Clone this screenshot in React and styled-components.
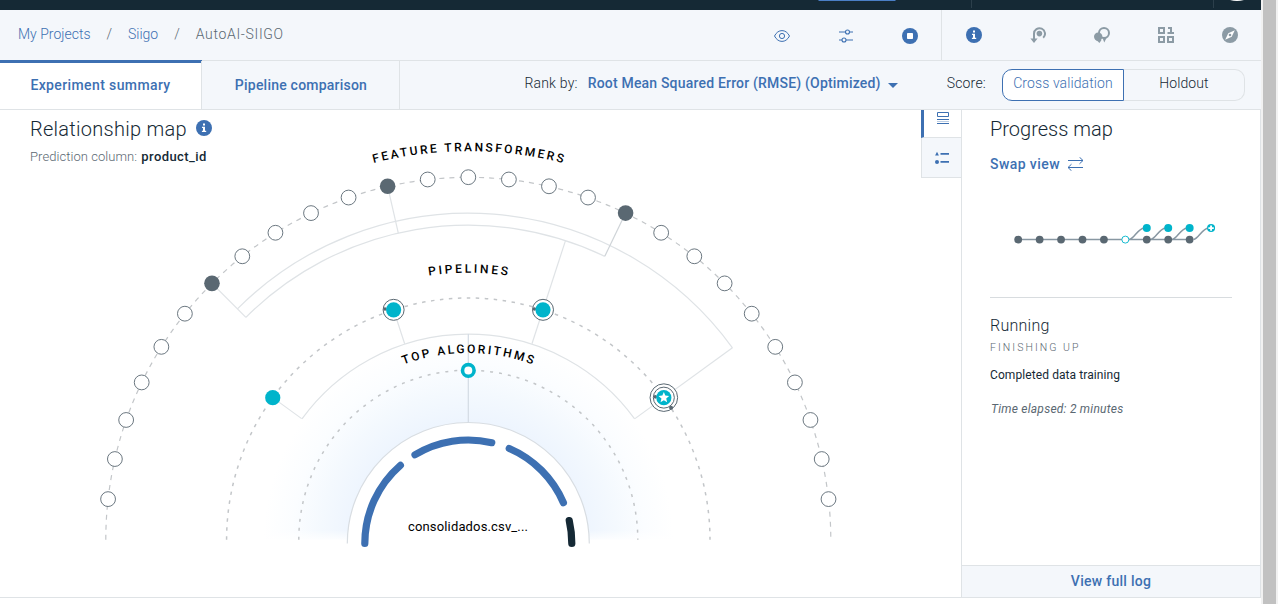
import React from "react";
import styled, { createGlobalStyle } from "styled-components";

const blue = "#3d70b2";
const ink = "#152935";
const slate = "#5a6872";
const line = "#dfe3e6";
const panel = "#f4f7fb";
const teal = "#00b4cb";
const iconGrey = "#8c9ba5";

const GlobalStyle = createGlobalStyle`
  *, *::before, *::after { box-sizing: border-box; }
  html, body { margin: 0; padding: 0; overflow: hidden; background: #fff; }
  body { font-family: Roboto, "Liberation Sans", sans-serif; font-size: 14px; font-weight: 300; color: ${ink}; }
  button { font: inherit; color: inherit; border: 0; background: none; padding: 0; margin: 0; }
  svg { display: block; flex: none; }
`;

/* ---------- page frame ---------- */
const Window = styled.div`
  display: flex;
  width: 1278px;
  height: 604px;
`;
const Page = styled.div`
  display: flex;
  flex-direction: column;
  width: 1261px;
`;
const ScrollTrack = styled.div`
  width: 17px;
  padding: 0 2px;
  background: #f1f1f1;
`;
const ScrollThumb = styled.div`
  height: 100%;
  background: #c1c1c1;
`;
const TopBar = styled.header`
  height: 10px;
  flex: none;
  background: ${ink};
`;

/* ---------- breadcrumb bar ---------- */
const NavBar = styled.nav`
  display: flex;
  align-items: stretch;
  height: 51px;
  flex: none;
  background: ${panel};
  border-bottom: 1px solid ${line};
`;
const Crumbs = styled.div`
  display: flex;
  align-items: center;
  flex: 1;
  padding-left: 18px;
  padding-bottom: 2px;
`;
const Crumb = styled.span`
  color: ${(p) => (p.$current ? slate : blue)};
  letter-spacing: ${(p) => p.$track || 0}px;
`;
const Slash = styled.span`
  width: 37.5px;
  text-align: center;
  color: ${slate};
`;
const IconGroup = styled.div`
  display: flex;
  align-items: center;
  gap: 48px;
  padding: ${(p) => p.$pad};
  border-left: ${(p) => (p.$divided ? `1px solid ${line}` : "0")};
`;

/* ---------- tab bar ---------- */
const TabBar = styled.div`
  display: flex;
  height: 49px;
  flex: none;
  background: ${panel};
  border-bottom: 1px solid ${line};
`;
const Tab = styled.button`
  width: ${(p) => p.$width}px;
  padding-left: ${(p) => (p.$active ? 0 : 1)}px;
  font-weight: 500;
  letter-spacing: ${(p) => p.$track}px;
  color: ${blue};
  border-right: 1px solid ${line};
  background: ${(p) => (p.$active ? "#fff" : "transparent")};
  box-shadow: ${(p) => (p.$active ? `inset 0 2px 0 ${blue}, 0 -1px 0 ${blue}` : "none")};
`;
const Filters = styled.div`
  display: flex;
  align-items: center;
  flex: 1;
  justify-content: flex-end;
  padding-right: 16px;
`;
const FilterLabel = styled.span`
  padding-bottom: 4px;
  margin-right: ${(p) => p.$gap}px;
  letter-spacing: 0.2px;
`;
const RankSelect = styled.button`
  display: flex;
  align-items: center;
  gap: 7px;
  width: 359px;
  padding-bottom: 4px;
  font-weight: 500;
  letter-spacing: 0.19px;
  white-space: nowrap;
  color: ${blue};
`;
const Caret = styled.span`
  margin-top: 4px;
  border: 5px solid transparent;
  border-top-color: ${blue};
  border-bottom: 0;
`;
const Segmented = styled.div`
  display: flex;
  width: 243px;
  height: 32px;
`;
const Segment = styled.button`
  width: ${(p) => (p.$active ? 122 : 121)}px;
  padding-bottom: 4px;
  letter-spacing: 0.1px;
  color: ${(p) => (p.$active ? blue : ink)};
  background: ${(p) => (p.$active ? "#fff" : "transparent")};
  border: 1px solid ${(p) => (p.$active ? blue : line)};
  border-left-width: ${(p) => (p.$active ? 1 : 0)}px;
  border-radius: ${(p) => (p.$active ? "10px 0 0 10px" : "0 10px 10px 0")};
`;

/* ---------- body ---------- */
const Body = styled.main`
  display: flex;
  height: 488px;
  border-bottom: 1px solid ${line};
`;
const MapPanel = styled.section`
  display: grid;
  width: 921px;
`;
const MapHeading = styled.div`
  grid-area: 1 / 1;
  z-index: 1;
  align-self: start;
  justify-self: start;
  padding: 7px 0 0 30px;
`;
const TitleRow = styled.div`
  display: flex;
  align-items: center;
  gap: 9px;
  svg { margin-top: -2px; }
`;
const Title = styled.h2`
  margin: 0;
  font-size: 20px;
  font-weight: 300;
  line-height: 24px;
  letter-spacing: ${(p) => p.$track || 0}px;
`;
const Prediction = styled.div`
  margin-top: 7px;
  font-size: 13px;
  line-height: 18px;
  letter-spacing: 0.06px;
  color: ${slate};
`;
const ColumnName = styled.b`
  margin-left: 1px;
  font-weight: 500;
  letter-spacing: 0.42px;
  color: ${ink};
`;
const MapCanvas = styled.svg`
  grid-area: 1 / 1;
`;
const Rail = styled.div`
  width: 40px;
`;
const RailButton = styled.button`
  display: flex;
  justify-content: center;
  width: 40px;
  height: ${(p) => (p.$active ? 28 : 40)}px;
  padding-top: ${(p) => (p.$active ? 2 : 13)}px;
  padding-left: ${(p) => (p.$active ? 1 : 0)}px;
  border-left: ${(p) => (p.$active ? `3px solid ${blue}` : `1px solid ${line}`)};
  border-bottom: 1px solid ${line};
  background: ${(p) => (p.$active ? "#fff" : panel)};
`;
const Side = styled.aside`
  display: flex;
  flex-direction: column;
  width: 300px;
  border-left: 1px solid ${line};
  border-right: 1px solid ${line};
`;
const SideContent = styled.div`
  flex: 1;
  padding: 7px 28px 0;
`;
const SwapLink = styled.button`
  display: flex;
  align-items: center;
  gap: 7px;
  height: 18px;
  margin-top: 14px;
  font-weight: 500;
  letter-spacing: 0.42px;
  color: ${blue};
`;
const ProgressChart = styled.svg`
  margin: 24px 0 0;
`;
const Status = styled.div`
  padding-top: 18px;
  border-top: 1px solid #d8dcdf;
`;
const State = styled.div`
  font-size: 16px;
  line-height: 20px;
  letter-spacing: 0.25px;
`;
const Step = styled.div`
  margin-top: 4px;
  font-size: 10.5px;
  line-height: 16px;
  letter-spacing: 2.05px;
  color: ${slate};
`;
const Message = styled.div`
  margin-top: 10px;
  font-size: 12px;
  font-weight: 400;
  line-height: 18px;
  letter-spacing: 0.09px;
`;
const Elapsed = styled.div`
  margin-top: 16px;
  padding-left: 1px;
  font-size: 12px;
  font-weight: 400;
  line-height: 18px;
  font-style: italic;
  letter-spacing: 0.24px;
  color: ${slate};
`;
const LogButton = styled.button`
  height: 32px;
  padding-bottom: 1px;
  border-top: 1px solid ${line};
  background: ${panel};
  font-weight: 500;
  letter-spacing: 0.27px;
  color: ${blue};
`;
const ArcLabel = styled.text`
  font-size: 12px;
  font-weight: 500;
  fill: #000;
`;
const FileLabel = styled.text`
  font-size: 13px;
  font-weight: 400;
  fill: #000;
  letter-spacing: 0.15px;
`;

/* ---------- icons ---------- */
const EyeIcon = () => (
  <svg width="16" height="16" viewBox="0 0 16 16" fill="none" stroke={blue} strokeWidth="1">
    <path d="M.5 8C2.400 4.300 5 2.600 8 2.600s5.600 1.700 7.500 5.400C13.600 11.700 11 13.400 8 13.400S2.400 11.700 .5 8z" />
    <circle cx="8" cy="8" r="2.600" />
  </svg>
);
const SlidersIcon = () => (
  <svg width="16" height="16" viewBox="0 0 16 16" fill="none" stroke={blue} strokeWidth="1.100">
    <path d="M1 4h6.500M11.500 4H15M1 12h3M8 12h7" />
    <circle cx="9.500" cy="4" r="2" />
    <circle cx="6" cy="12" r="2" />
  </svg>
);
const StopIcon = () => (
  <svg width="16" height="16" viewBox="0 0 16 16">
    <circle cx="8" cy="8" r="8" fill={blue} />
    <rect x="5" y="5" width="6" height="6" rx=".8" fill="#fff" />
  </svg>
);
const InfoIcon = () => (
  <svg width="16" height="16" viewBox="0 0 16 16">
    <circle cx="8" cy="8" r="8" fill={blue} />
    <path d="M7 3.400h2v2H7zM6 6.700h3v4.100h1.200V12H5.900v-1.200H7V7.900H6z" fill="#fff" />
  </svg>
);
const HowToIcon = () => (
  <svg width="16" height="16" viewBox="0 0 16 16" fill="none">
    <path d="M4 13V6.800a5.500 5.500 0 1 1 9.200 4" stroke={iconGrey} strokeWidth="2" />
    <circle cx="9.400" cy="6.600" r="2.800" fill={iconGrey} />
    <path d="M.4 11.600h7.200L4 16z" fill={iconGrey} />
  </svg>
);
const ChatIcon = () => (
  <svg width="16" height="16" viewBox="0 0 16 16">
    <circle cx="10" cy="6" r="5" fill="none" stroke={iconGrey} strokeWidth="2" />
    <path d="M8.300 10.500h4.400L10.300 15.500z" fill={iconGrey} />
    <circle cx="4.200" cy="9.800" r="4.200" fill={iconGrey} />
    <path d="M2.500 13h5L5.400 16z" fill={iconGrey} />
  </svg>
);
const DataIcon = () => (
  <svg width="16" height="16" viewBox="0 0 16 16" fill="none" stroke={iconGrey} strokeWidth="2">
    <path d="M1 1h5v5H1zM1 10h5v5H1zM10 10h5v5h-5zM10 1h3v5M9.500 6H16" />
  </svg>
);
const CompassIcon = () => (
  <svg width="16" height="16" viewBox="0 0 16 16">
    <circle cx="8" cy="8" r="8" fill={iconGrey} />
    <path d="M12.800 3.200L9.700 9.700 3.200 12.800 6.300 6.300z" fill="#fff" />
    <circle cx="8" cy="8" r="1.300" fill={iconGrey} />
  </svg>
);
const RowsIcon = () => (
  <svg width="14" height="14" viewBox="0 0 14 14" fill="none" stroke={blue}>
    <path d="M1.500 .5h11v4h-11zM1 7.500h12M1 11.500h12" />
    <path d="M1 9.500h12" strokeOpacity=".35" />
  </svg>
);
const LegendIcon = () => (
  <svg width="16" height="14" viewBox="0 0 16 14" fill={blue}>
    <path d="M3 .8L4.900 4.600H1.100zM6.500 2H15v1.700H6.500zM6.500 10H15v1.700H6.500z" />
    <circle cx="3" cy="11" r="2" />
  </svg>
);
const SwapIcon = () => (
  <svg width="17" height="14" viewBox="0 0 17 14" fill="none" stroke={blue}>
    <path d="M1 3.500h15M12.500 .2L16 3.500l-3.500 3.300M16 10.500H1M4.500 7.200L1 10.500l3.500 3.300" />
  </svg>
);

/* ---------- relationship map ---------- */
const CX = 468.3;
const CY = 539.7;
const rad = (deg) => (deg * Math.PI) / 180;
// Angles are measured clockwise from straight up.
const at = (r, deg, cy = CY) => [CX + r * Math.sin(rad(deg)), cy - r * Math.cos(rad(deg))];
const arc = (r, from, to, cy = CY) => `M${at(r, from, cy).join(" ")}A${r} ${r} 0 0 1 ${at(r, to, cy).join(" ")}`;
const spoke = (r1, r2, deg) => `M${at(r1, deg).join(" ")}L${at(r2, deg).join(" ")}`;

const STEP = 180 / 28;
const OUTER = 362.5;
const transformers = Array.from({ length: 27 }, (_, i) => i - 13);
const selected = [-7, -2, 4];
const gauge = [
  [-90, -41, blue],
  [-31, 13.1, blue],
  [23.3, 66.8, blue],
  [77.2, 90, ink],
];
const labels = [
  { id: "transformers", text: "FEATURE TRANSFORMERS", r: 388.5, half: 14.1, length: 191 },
  { id: "pipelines", text: "PIPELINES", r: 267, half: 8.5, length: 79 },
  { id: "algorithms", text: "TOP ALGORITHMS", r: 186.7, half: 20.3, length: 131.5 },
];

const Dot = ({ r, deg, fill, stroke = "none", radius = 7.6, width = 0 }) => {
  const [x, y] = at(r, deg);
  return <circle cx={x} cy={y} r={radius} fill={fill} stroke={stroke} strokeWidth={width} />;
};

function star(x, y, outer, inner) {
  return Array.from({ length: 10 }, (_, i) => {
    const r = i % 2 ? inner : outer;
    return `${x + r * Math.sin(rad(i * 36))},${y - r * Math.cos(rad(i * 36))}`;
  }).join(" ");
}

function RelationshipMap() {
  const [sx, sy] = at(241.7, 54);
  return (
    <MapCanvas width="921" height="487" viewBox="0 110 921 487">
      <defs>
        <radialGradient id="glow" gradientUnits="userSpaceOnUse" cx={CX} cy={CY} r="205">
          <stop offset="0.580" stopColor="#eef5fe" />
          <stop offset="0.720" stopColor="#f4f9fe" />
          <stop offset="0.860" stopColor="#fbfdff" />
          <stop offset="1" stopColor="#fff" />
        </radialGradient>
        <linearGradient id="fade" x1="0" y1="0" x2="0" y2="1">
          <stop offset="0" stopColor="#fff" stopOpacity="0" />
          <stop offset="1" stopColor="#fff" />
        </linearGradient>
        {labels.map((l) => (
          <path key={l.id} id={l.id} d={arc(l.r, -l.half, 45)} />
        ))}
      </defs>

      <path d={`${arc(205, -90, 90)}z`} fill="url(#glow)" />
      <rect x="260" y="530" width="416" height="12" fill="url(#fade)" />
      <path d={`${arc(121, -90, 90, 543.5)}v3H347z`} fill="#fff" />

      <g fill="none" stroke="#c3c6c9" strokeWidth="1.500">
        <path d={arc(OUTER, -90, 90)} strokeDasharray="5 5" strokeWidth="1.200" />
        <path d={arc(241.7, -90, 90)} strokeDasharray="3.500 5.500" />
        <path d={arc(169.5, -90, 90)} strokeDasharray="3 6" />
      </g>

      <g fill="none" stroke={line} strokeWidth="1.200">
        <path d={arc(121, -90, 90, 543.5)} stroke="#d8dde2" />
        <path d={arc(326.5, -45, 54)} />
        <path d={arc(314.5, -45, 4 * STEP)} />
        <path d={spoke(OUTER, 314.5, -45)} />
        <path d={spoke(OUTER, 314.5, -2 * STEP)} />
        <path d={spoke(OUTER, 314.5, 4 * STEP)} stroke="#cfd4d8" />
        <path d={spoke(326.5, 206, 54)} />
        <path d={spoke(314.5, 206, 18)} />
        <path d={spoke(241.7, 206, -18)} />
        <path d={spoke(241.7, 206, -54)} />
        <path d={arc(205.6, -54, 54)} />
        <path d={`M${CX} 334V422.5`} stroke="#d3dbe4" />
      </g>

      {transformers.map((i) =>
        selected.includes(i) ? (
          <Dot key={i} r={OUTER} deg={i * STEP} fill={slate} radius={7.8} />
        ) : (
          <Dot key={i} r={OUTER} deg={i * STEP} fill="#fff" stroke={slate} radius={7.4} width={0.9} />
        )
      )}

      {[-18, 18].map((deg) => {
        const [x, y] = at(241.7, deg);
        return (
          <g key={deg}>
            <circle cx={x} cy={y} r="10.500" fill="#fff" stroke={slate} />
            <circle cx={x - 8.6} cy={y - 0.8} r="1.800" fill={slate} />
            <circle cx={x} cy={y} r="7.600" fill={teal} />
          </g>
        );
      })}
      <Dot r={241.7} deg={-54} fill={teal} />
      <circle cx={sx} cy={sy} r="13.800" fill="#fff" stroke={slate} />
      <circle cx={sx} cy={sy} r="10.500" fill="#fff" stroke={slate} />
      <circle cx={sx - 8.6} cy={sy - 0.8} r="1.800" fill={slate} />
      <circle cx={sx + 7.2} cy={sy + 10} r="2" fill={slate} />
      <circle cx={sx} cy={sy} r="7.600" fill={teal} />
      <polygon points={star(sx, sy, 5.6, 2.5)} fill="#fff" />
      <Dot r={169.3} deg={0} fill="#fff" stroke={teal} radius={5.8} width={3.6} />

      {gauge.map(([from, to, color]) => (
        <path key={from} d={arc(103.5, from, to, 543.5)} fill="none" stroke={color} strokeWidth="7.200" strokeLinecap="round" />
      ))}

      {labels.map((l) => (
        <ArcLabel key={l.id} textLength={l.length}>
          <textPath href={`#${l.id}`} textLength={l.length}>{l.text}</textPath>
        </ArcLabel>
      ))}
      <FileLabel x="408" y="531">consolidados.csv_...</FileLabel>
    </MapCanvas>
  );
}

/* ---------- progress map ---------- */
const stepX = (i) => 28.2 + i * 21.43;

function ProgressMap() {
  return (
    <ProgressChart width="242" height="100" viewBox="0 197 242 100">
      <g fill="none" stroke="#8897a2" strokeWidth="1.500">
        <path d={`M${stepX(0)} 239.600H${stepX(8)}`} />
        {[5, 6, 7, 8].map((i) => (
          <path key={i} d={`M${stepX(i) + 4} 239.500c5 -1 8-10.500 15-11.400`} />
        ))}
      </g>
      {[0, 1, 2, 3, 4, 6, 7, 8].map((i) => (
        <circle key={i} cx={stepX(i)} cy="239.600" r="3.900" fill={slate} />
      ))}
      <circle cx={stepX(5)} cy="239.600" r="3.500" fill="#fff" stroke={teal} strokeWidth=".9" />
      {[6, 7, 8, 9].map((i) => (
        <circle key={i} cx={stepX(i)} cy="228.100" r="4" fill={teal} />
      ))}
      <path d={`M${stepX(9) - 2.7} 228.100h5.400M${stepX(9)} 225.400v5.400`} stroke="#fff" strokeWidth="1.900" />
    </ProgressChart>
  );
}

const TopBarMarks = () => (
  <svg width="1261" height="10" viewBox="0 0 1261 10">
    <path d="M971.500 0v8M1213.500 0v8" stroke="#2c3f4b" />
    <path d="M818 0h78l-1 .9h-76z" fill="#4a7fc6" />
    <path d="M1230 0h14q-7 1.800-14 0z" fill="#fff" />
  </svg>
);

export default function App() {
  return (
    <>
      <GlobalStyle />
      <Window>
        <Page>
          <TopBar>
            <TopBarMarks />
          </TopBar>
          <NavBar>
            <Crumbs>
              <Crumb>My Projects</Crumb>
              <Slash>/</Slash>
              <Crumb>Siigo</Crumb>
              <Slash>/</Slash>
              <Crumb $current $track={0.68}>AutoAI-SIIGO</Crumb>
            </Crumbs>
            <IconGroup $pad="2px 23px 0 0">
              <EyeIcon />
              <SlidersIcon />
              <StopIcon />
            </IconGroup>
            <IconGroup $divided $pad="0 23px 0 24px">
              <InfoIcon />
              <HowToIcon />
              <ChatIcon />
              <DataIcon />
              <CompassIcon />
            </IconGroup>
          </NavBar>
          <TabBar>
            <Tab $active $width={202} $track={0.38}>Experiment summary</Tab>
            <Tab $width={198} $track={0.22}>Pipeline comparison</Tab>
            <Filters>
              <FilterLabel $gap={10}>Rank by:</FilterLabel>
              <RankSelect>
                Root Mean Squared Error (RMSE) (Optimized)
                <Caret />
              </RankSelect>
              <FilterLabel $gap={16}>Score:</FilterLabel>
              <Segmented>
                <Segment $active>Cross validation</Segment>
                <Segment>Holdout</Segment>
              </Segmented>
            </Filters>
          </TabBar>
          <Body>
            <MapPanel>
              <MapHeading>
                <TitleRow>
                  <Title $track={0.27}>Relationship map</Title>
                  <InfoIcon />
                </TitleRow>
                <Prediction>
                  Prediction column: <ColumnName>product_id</ColumnName>
                </Prediction>
              </MapHeading>
              <RelationshipMap />
            </MapPanel>
            <Rail>
              <RailButton $active>
                <RowsIcon />
              </RailButton>
              <RailButton>
                <LegendIcon />
              </RailButton>
            </Rail>
            <Side>
              <SideContent>
                <Title>Progress map</Title>
                <SwapLink>
                  Swap view
                  <SwapIcon />
                </SwapLink>
                <ProgressMap />
                <Status>
                  <State>Running</State>
                  <Step>FINISHING UP</Step>
                  <Message>Completed data training</Message>
                  <Elapsed>Time elapsed: 2 minutes</Elapsed>
                </Status>
              </SideContent>
              <LogButton>View full log</LogButton>
            </Side>
          </Body>
        </Page>
        <ScrollTrack>
          <ScrollThumb />
        </ScrollTrack>
      </Window>
    </>
  );
}
